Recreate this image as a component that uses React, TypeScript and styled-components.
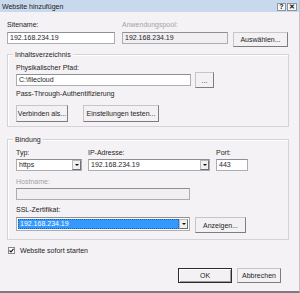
import React from "react";
import styled, { createGlobalStyle } from "styled-components";

const Global = createGlobalStyle`
  html, body { margin: 0; padding: 0; background: #f4f2f5; }
  * { box-sizing: border-box; }
`;

const Window = styled.div`
  width: 300px;
  height: 293px;
  display: flex;
  flex-direction: column;
  background: #f4f2f5;
  border-right: 1px solid #c4c4c8;
  border-bottom: 2px solid #7c7c80;
  font-family: "Liberation Sans", Arial, sans-serif;
  font-size: 7px;
  color: #1e1e1e;
  overflow: hidden;
`;

const TitleBar = styled.div`
  height: 12px;
  flex: none;
  background: #c8d9ed;
  display: flex;
  align-items: center;
  justify-content: space-between;
  padding: 0 2px 0 2px;
`;

const TitleText = styled.span`
  line-height: 9px;
  color: #1a1a1a;
`;

const TitleButtons = styled.div`
  display: flex;
  gap: 1px;
  padding-top: 2px;
`;

const TitleButton = styled.div<{ $w: number }>`
  width: ${(p) => p.$w}px;
  height: 8px;
  border: 1px solid #8893a3;
  background: #f7f7f7;
  display: flex;
  align-items: center;
  justify-content: center;
  font-weight: bold;
  font-size: 7px;
  line-height: 6px;
  color: #111;
`;

const Body = styled.div`
  flex: 1;
  display: flex;
  flex-direction: column;
  padding: 9px 10px 0 7px;
`;

const Row = styled.div<{ $gap?: number; $mt?: number; $align?: string }>`
  display: flex;
  gap: ${(p) => p.$gap ?? 0}px;
  margin-top: ${(p) => p.$mt ?? 0}px;
  align-items: ${(p) => p.$align ?? "flex-start"};
`;

const Field = styled.div<{ $w: number; $gap?: number }>`
  display: flex;
  flex-direction: column;
  width: ${(p) => p.$w}px;
  gap: ${(p) => p.$gap ?? 2}px;
`;

const Label = styled.div<{ $disabled?: boolean; $mt?: number }>`
  line-height: 8px;
  height: 8px;
  white-space: nowrap;
  margin-top: ${(p) => p.$mt ?? 0}px;
  color: ${(p) => (p.$disabled ? "#a3a3a6" : "#1e1e1e")};
`;

const TextBox = styled.div<{ $w?: number; $disabled?: boolean; $h?: number }>`
  height: ${(p) => p.$h ?? 12}px;
  width: ${(p) => (p.$w ? `${p.$w}px` : "100%")};
  border: 1px solid #abadb3;
  border-top-color: #8e8f94;
  background: ${(p) => (p.$disabled ? "#f1eff2" : "#ffffff")};
  padding-left: 2px;
  line-height: 10px;
  white-space: nowrap;
  overflow: hidden;
`;

const Button = styled.div<{ $w: number; $h?: number; $mt?: number; $default?: boolean }>`
  width: ${(p) => p.$w}px;
  height: ${(p) => p.$h ?? 15}px;
  margin-top: ${(p) => p.$mt ?? 0}px;
  flex: none;
  border: 1px solid #c6c6c6;
  border-right-color: #7d7d7d;
  border-bottom-color: #7d7d7d;
  background: #f3f1f3;
  display: flex;
  align-items: center;
  justify-content: center;
  white-space: nowrap;
  color: #1e1e1e;
  ${(p) =>
    p.$default &&
    `border: 1px solid #2c2c2c; box-shadow: inset 1px 1px 0 #ffffff, inset -1px -1px 0 #9a9a9a;`}
`;

const Group = styled.div<{ $mt?: number; $pb?: number }>`
  position: relative;
  margin-top: ${(p) => p.$mt ?? 0}px;
  border: 1px solid #d6d3d8;
  box-shadow: inset 1px 1px 0 #ffffff;
  padding: 9px 8px ${(p) => p.$pb ?? 4}px 8px;
  display: flex;
  flex-direction: column;
`;

const GroupTitle = styled.span`
  position: absolute;
  top: -5px;
  left: 5px;
  padding: 0 2px;
  background: #f4f2f5;
  line-height: 9px;
`;

const SelectBox = styled.div<{ $w: number; $h?: number; $selected?: boolean }>`
  width: ${(p) => p.$w}px;
  height: ${(p) => p.$h ?? 12}px;
  display: flex;
  border: 1px solid #abadb3;
  border-top-color: #8e8f94;
  background: #ffffff;
  padding: ${(p) => (p.$selected ? "1px" : "0")};
`;

const SelectValue = styled.div<{ $selected?: boolean }>`
  flex: 1;
  padding-left: 2px;
  line-height: 10px;
  white-space: nowrap;
  background: ${(p) => (p.$selected ? "#3399ff" : "transparent")};
  color: ${(p) => (p.$selected ? "#ffffff" : "#1e1e1e")};
  ${(p) => p.$selected && "outline: 1px dotted #1a5ea8; outline-offset: -1px;"}
`;

const SelectArrow = styled.div`
  width: 9px;
  flex: none;
  border: 1px solid #b9b9b9;
  border-right-color: #6e6e6e;
  border-bottom-color: #6e6e6e;
  background: #f1f0f1;
  display: flex;
  align-items: center;
  justify-content: center;
`;

const Triangle = styled.span`
  width: 0;
  height: 0;
  border-left: 2px solid transparent;
  border-right: 2px solid transparent;
  border-top: 2px solid #111;
`;

const Check = styled.div`
  width: 7px;
  height: 7px;
  border: 1px solid #8a8a8a;
  background: #ffffff;
  display: flex;
  align-items: center;
  justify-content: center;
  flex: none;
`;

const CheckRow = styled.div`
  display: flex;
  align-items: center;
  gap: 5px;
  margin-top: 6px;
  margin-left: 1px;
  line-height: 9px;
`;

const Footer = styled.div`
  display: flex;
  justify-content: flex-end;
  gap: 5px;
  margin-top: 13px;
  padding-right: 8px;
`;

const Select = ({ w, h, value, selected }: { w: number; h?: number; value: string; selected?: boolean }) => (
  <SelectBox $w={w} $h={h} $selected={selected}>
    <SelectValue $selected={selected}>{value}</SelectValue>
    <SelectArrow>
      <Triangle />
    </SelectArrow>
  </SelectBox>
);

export default function App() {
  return (
    <>
      <Global />
      <Window>
        <TitleBar>
          <TitleText>Website hinzufügen</TitleText>
          <TitleButtons>
            <TitleButton $w={9}>?</TitleButton>
            <TitleButton $w={10}>✕</TitleButton>
          </TitleButtons>
        </TitleBar>
        <Body>
          <Row>
            <Field $w={108} $gap={3}>
              <Label>Sitename:</Label>
              <TextBox>192.168.234.19</TextBox>
            </Field>
            <Field $w={106} $gap={3} style={{ marginLeft: 7 }}>
              <Label $disabled>Anwendungspool:</Label>
              <TextBox $disabled>192.168.234.19</TextBox>
            </Field>
            <Button $w={55} $mt={11} style={{ marginLeft: 5 }}>
              Auswählen...
            </Button>
          </Row>

          <Group $mt={7} $pb={4}>
            <GroupTitle>Inhaltsverzeichnis</GroupTitle>
            <Label>Physikalischer Pfad:</Label>
            <Row $gap={4} $align="center">
              <TextBox $w={175}>C:\filecloud</TextBox>
              <Button $w={19} $h={16}>...</Button>
            </Row>
            <Label $mt={2}>Pass-Through-Authentifizierung</Label>
            <Row $gap={15} $mt={7}>
              <Button $w={52} $h={17}>Verbinden als...</Button>
              <Button $w={76} $h={17}>Einstellungen testen...</Button>
            </Row>
          </Group>

          <Group $mt={12} $pb={6}>
            <GroupTitle>Bindung</GroupTitle>
            <Row $gap={6}>
              <Field $w={66}>
                <Label>Typ:</Label>
                <Select w={66} value="https" />
              </Field>
              <Field $w={122}>
                <Label>IP-Adresse:</Label>
                <Select w={122} value="192.168.234.19" />
              </Field>
              <Field $w={32}>
                <Label>Port:</Label>
                <TextBox>443</TextBox>
              </Field>
            </Row>
            <Label $disabled $mt={7}>Hostname:</Label>
            <TextBox $w={174} $disabled style={{ marginTop: 2 }} />
            <Label $mt={6}>SSL-Zertifikat:</Label>
            <Row $gap={5} $mt={3}>
              <Select w={174} h={14} value="192.168.234.19" selected />
              <Button $w={51} $h={16}>Anzeigen...</Button>
            </Row>
          </Group>

          <CheckRow>
            <Check>
              <svg width="5" height="5" viewBox="0 0 5 5">
                <path d="M0.5 2.5 L2 4 L4.5 0.8" stroke="#111" strokeWidth="1.1" fill="none" />
              </svg>
            </Check>
            <span>Website sofort starten</span>
          </CheckRow>

          <Footer>
            <Button $w={54} $default>OK</Button>
            <Button $w={44}>Abbrechen</Button>
          </Footer>
        </Body>
      </Window>
    </>
  );
}
